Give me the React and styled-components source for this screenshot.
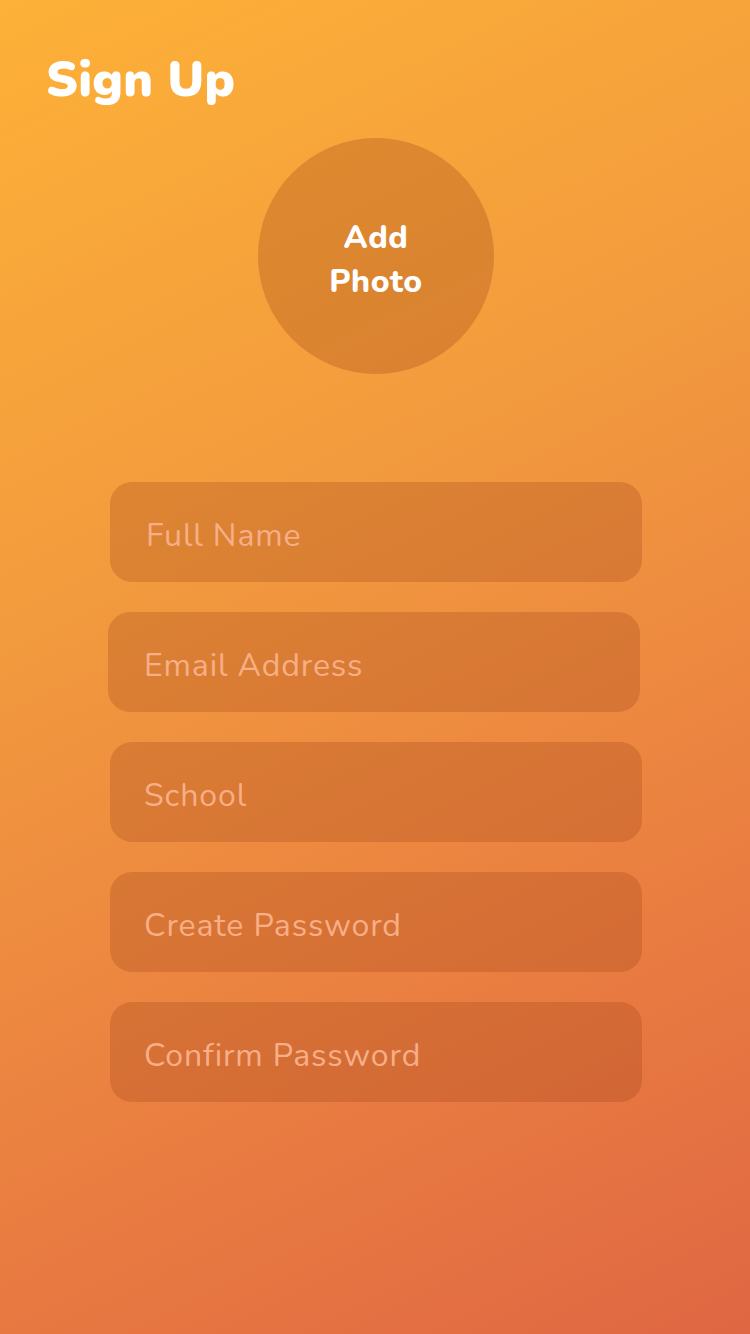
import React from 'react';
import styled, { createGlobalStyle } from 'styled-components';

const GlobalStyle = createGlobalStyle`
  html, body {
    margin: 0;
    padding: 0;
  }
  body {
    font-family: "Nunito", "Lato", "Open Sans", sans-serif;
  }
  * {
    box-sizing: border-box;
  }
`;

const Screen = styled.div`
  min-height: 100vh;
  width: 750px;
  background: linear-gradient(154deg, #fdb137 0%, #f29a3e 38%, #e97c41 74%, #df6743 100%);
  display: flex;
  flex-direction: column;
`;

const Title = styled.h1`
  margin: 0;
  padding: 52px 46px 0;
  font-size: 49px;
  line-height: 56px;
  font-weight: 900;
  color: #ffffff;
  letter-spacing: 0.3px;
`;

const PhotoButton = styled.button`
  align-self: center;
  margin: 30px 0 0 2px;
  width: 236px;
  height: 236px;
  border-radius: 50%;
  border: none;
  background: rgba(150, 60, 20, 0.27);
  color: #ffffff;
  font-family: inherit;
  font-size: 32px;
  line-height: 44px;
  font-weight: 800;
  letter-spacing: 0.6px;
  padding-top: 8px;
  cursor: pointer;
`;

const Form = styled.form`
  display: flex;
  flex-direction: column;
  gap: 30px;
  margin-top: 108px;
  padding-left: 110px;
`;

const Field = styled.input`
  width: 532px;
  height: 100px;
  margin-left: ${(p) => p.shift || 0}px;
  border: none;
  border-radius: 22px;
  background: rgba(150, 60, 20, 0.25);
  padding: 6px 0 0 ${(p) => p.pad || 35}px;
  font-family: inherit;
  font-size: 32px;
  color: #ffffff;
  outline: none;
  letter-spacing: 0.9px;

  &::placeholder {
    color: #f8ae86;
    opacity: 1;
  }
`;

const fields = [
  { name: 'Full Name', pad: 36 },
  { name: 'Email Address', shift: -2, pad: 36 },
  { name: 'School', pad: 34 },
  { name: 'Create Password', pad: 34 },
  { name: 'Confirm Password', pad: 34 },
];

const App = () => {
  return (
    <>
      <GlobalStyle />
      <Screen>
        <Title>Sign Up</Title>
        <PhotoButton type="button">
          Add
          <br />
          Photo
        </PhotoButton>
        <Form onSubmit={(e) => e.preventDefault()}>
          {fields.map((f) => (
            <Field key={f.name} placeholder={f.name} shift={f.shift} pad={f.pad} />
          ))}
        </Form>
      </Screen>
    </>
  );
};

export default App;
